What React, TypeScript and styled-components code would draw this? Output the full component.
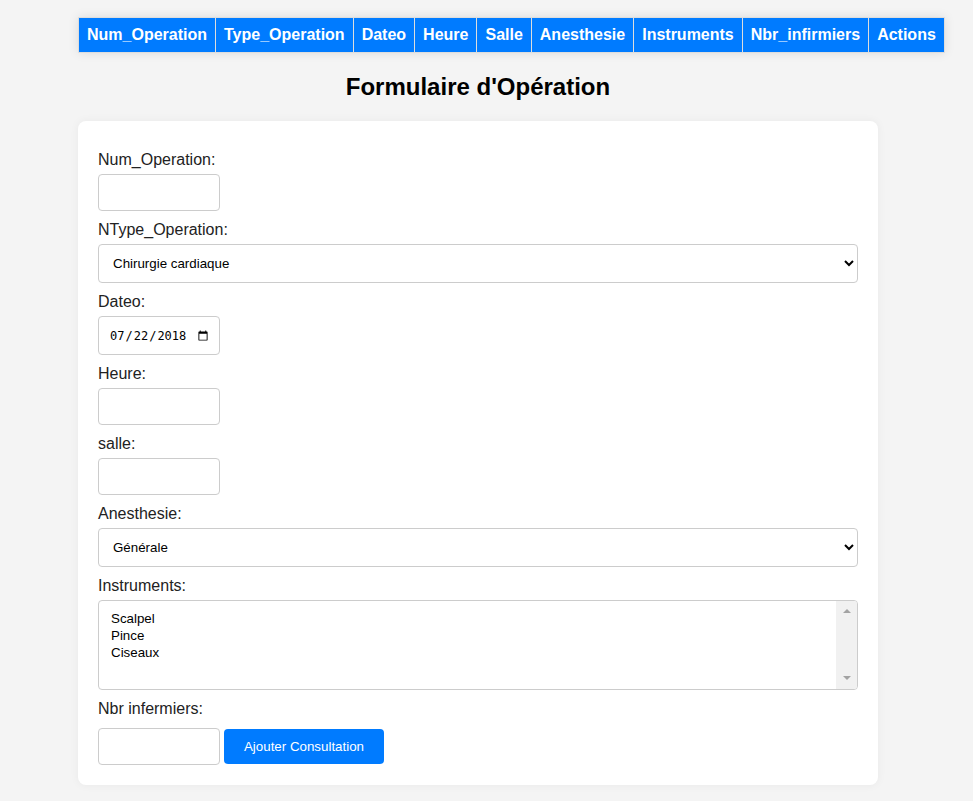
import React from "react";
import styled, { createGlobalStyle } from "styled-components";

const Global = createGlobalStyle`
  html, body { margin: 0; padding: 0; background: #f4f4f4; }
  body { font-family: "Liberation Sans", Arial, sans-serif; color: #333; }
`;

const Page = styled.div`
  width: 956px;
  padding-top: 17px;
  padding-bottom: 16px;
`;

const Container = styled.div`
  width: 800px;
  margin: 0 auto;
`;

const Table = styled.table`
  border-collapse: collapse;
  background: #fff;
  box-shadow: 0 0 10px rgba(0, 0, 0, 0.1);
  white-space: nowrap;
`;

const Th = styled.th`
  background: #007bff;
  color: #fff;
  font-size: 16px;
  font-weight: bold;
  padding: 8px;
  border: 1px solid #ddd;
  text-align: left;
`;

const Title = styled.h2`
  font-size: 24px;
  font-weight: bold;
  color: #000;
  text-align: center;
  margin: 20px 0;
`;

const Card = styled.form`
  background: #fff;
  border-radius: 8px;
  padding: 20px;
  box-shadow: 0 0 10px rgba(0, 0, 0, 0.05);
`;

const Label = styled.label<{ $last?: boolean }>`
  display: block;
  font-size: 16px;
  line-height: 18px;
  margin-top: 10px;
  margin-bottom: ${(p) => (p.$last ? "10px" : "5px")};
  color: #222;
`;

const TextInput = styled.input`
  display: block;
  box-sizing: border-box;
  width: 122px;
  height: 37px;
  padding: 10px;
  border: 1px solid #ccc;
  border-radius: 4px;
  font-family: "Liberation Sans", Arial, sans-serif;
  font-size: 13.33px;
  background: #fff;
`;

const DateInput = styled(TextInput)`
  height: 39px;
  font-family: "DejaVu Sans Mono", "Liberation Mono", monospace;
  font-size: 12px;
  padding: 10px 8px 10px 10px;
  color: #000;
`;

const Select = styled.select`
  display: block;
  box-sizing: border-box;
  width: 100%;
  height: 39px;
  padding: 10px;
  border: 1px solid #ccc;
  border-radius: 4px;
  background: #fff;
  font-family: "Liberation Sans", Arial, sans-serif;
  font-size: 13.33px;
  color: #000;
`;

const ListWrap = styled.div`
  position: relative;
`;

const MultiSelect = styled.select`
  display: block;
  box-sizing: border-box;
  width: 100%;
  height: 90px;
  padding: 10px 22px 10px 10px;
  border: 1px solid #ccc;
  border-radius: 4px;
  background: #fff;
  font-family: "Liberation Sans", Arial, sans-serif;
  font-size: 13.33px;
  color: #000;
  option { padding: 0 2px 1px; min-height: 16px; }
`;

const ScrollTrack = styled.div`
  position: absolute;
  top: 1px;
  right: 1px;
  bottom: 1px;
  width: 21px;
  background: #f1f1f1;
  border-radius: 0 3px 3px 0;
  display: flex;
  flex-direction: column;
  justify-content: space-between;
  align-items: center;
  padding: 8px 0 9px;
  box-sizing: border-box;
  pointer-events: none;
`;

const Arrow = styled.span<{ $down?: boolean }>`
  width: 0;
  height: 0;
  border-left: 4px solid transparent;
  border-right: 4px solid transparent;
  ${(p) =>
    p.$down
      ? "border-top: 4px solid #a3a3a3;"
      : "border-bottom: 4px solid #a3a3a3;"}
`;

const Row = styled.div`
  display: flex;
  align-items: center;
  gap: 4px;
`;

const Button = styled.button`
  box-sizing: border-box;
  width: 160px;
  height: 35px;
  border: none;
  border-radius: 4px;
  background: #007bff;
  color: #fff;
  font-family: "Liberation Sans", Arial, sans-serif;
  font-size: 13.33px;
  padding: 0 10px;
  white-space: nowrap;
  cursor: pointer;
`;

const headers = [
  "Num_Operation",
  "Type_Operation",
  "Dateo",
  "Heure",
  "Salle",
  "Anesthesie",
  "Instruments",
  "Nbr_infirmiers",
  "Actions",
];

export default function App() {
  return (
    <Page>
      <Global />
      <Container>
        <Table>
          <thead>
            <tr>
              {headers.map((h) => (
                <Th key={h}>{h}</Th>
              ))}
            </tr>
          </thead>
        </Table>
        <Title>Formulaire d'Opération</Title>
        <Card onSubmit={(e) => e.preventDefault()}>
          <Label>Num_Operation:</Label>
          <TextInput type="text" />
          <Label>NType_Operation:</Label>
          <Select defaultValue="Chirurgie cardiaque">
            <option>Chirurgie cardiaque</option>
            <option>Chirurgie orthopédique</option>
            <option>Neurochirurgie</option>
          </Select>
          <Label>Dateo:</Label>
          <DateInput type="date" defaultValue="2018-07-22" />
          <Label>Heure:</Label>
          <TextInput type="text" />
          <Label>salle:</Label>
          <TextInput type="text" />
          <Label>Anesthesie:</Label>
          <Select defaultValue="Générale">
            <option>Générale</option>
            <option>Locale</option>
            <option>Régionale</option>
          </Select>
          <Label>Instruments:</Label>
          <ListWrap>
            <MultiSelect multiple size={4} defaultValue={[]}>
              <option>Scalpel</option>
              <option>Pince</option>
              <option>Ciseaux</option>
            </MultiSelect>
            <ScrollTrack>
              <Arrow />
              <Arrow $down />
            </ScrollTrack>
          </ListWrap>
          <Label $last>Nbr infermiers:</Label>
          <Row>
            <TextInput type="number" />
            <Button type="submit">Ajouter Consultation</Button>
          </Row>
        </Card>
      </Container>
    </Page>
  );
}
